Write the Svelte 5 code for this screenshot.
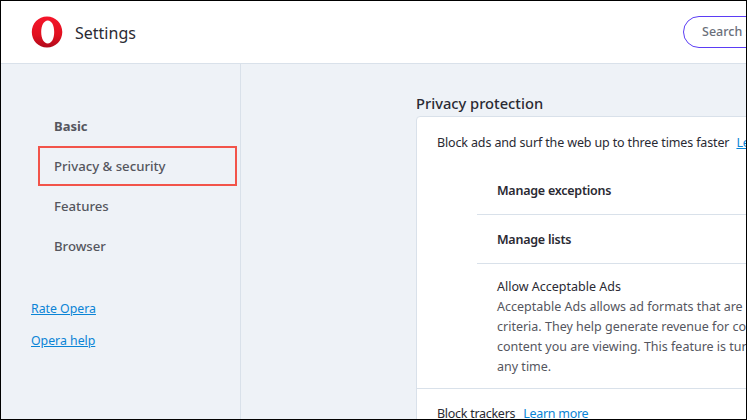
<script lang="ts">
  const navItems = [
    { label: 'Basic', bold: true },
    { label: 'Privacy & security', boxed: true },
    { label: 'Features' },
    { label: 'Browser' }
  ];
</script>

<div class="frame">
  <header class="topbar">
    <svg class="logo" viewBox="0 0 32 32" width="32" height="32" aria-hidden="true">
      <defs>
        <linearGradient id="red" x1="0" y1="0" x2="0" y2="1">
          <stop offset="0" stop-color="#f5162b" />
          <stop offset="0.6" stop-color="#e1101f" />
          <stop offset="1" stop-color="#b00a1c" />
        </linearGradient>
      </defs>
      <path
        fill="url(#red)"
        fill-rule="evenodd"
        d="M16 .5C7.300.5.800 7.500.800 16s6.500 15.500 15.200 15.500S31.300 24.500 31.300 16 24.700.5 16 .5zM16.800 4.500c3.900 0 6.400 5.100 6.400 11.500s-2.500 11.500-6.400 11.500-6.600-5.100-6.600-11.500 2.700-11.500 6.600-11.500z"
      />
    </svg>
    <h1 class="title">Settings</h1>
    <div class="search">Search settings</div>
  </header>

  <div class="body">
    <aside class="sidebar">
      <nav class="nav">
        {#each navItems as item}
          <div class="nav__item" class:nav__item--bold={item.bold} class:nav__item--boxed={item.boxed}>
            {item.label}
          </div>
        {/each}
      </nav>
      <div class="links">
        <a href="#rate">Rate Opera</a>
        <a href="#help">Opera help</a>
      </div>
    </aside>

    <main class="main">
      <h2 class="heading">Privacy protection</h2>
      <section class="card">
        <div class="intro">
          <span>Block ads and surf the web up to three times faster</span>
          <a href="#learn">Learn more</a>
        </div>
        <div class="sub">
          <div class="sub__row">Manage exceptions</div>
          <div class="sub__row">Manage lists</div>
          <div class="sub__text">
            <div class="sub__title">Allow Acceptable Ads</div>
            <div class="sub__desc">
              Acceptable Ads allows ad formats that are respectful of users and adhere to a strict set of<br />
              criteria. They help generate revenue for content creators and do not interfere with the<br />
              content you are viewing. This feature is turned on by default and you can turn it off at<br />
              any time.
            </div>
          </div>
        </div>
        <div class="trackers">
          <span>Block trackers</span>
          <a href="#trackers">Learn more</a>
        </div>
      </section>
    </main>
  </div>
</div>

<style>
  :global(body) {
    margin: 0;
  }

  .frame {
    box-sizing: border-box;
    width: 747px;
    height: 420px;
    overflow: hidden;
    display: flex;
    flex-direction: column;
    background: #eef2f7;
    border: 1px solid #000;
    font-family: "Noto Sans", "Open Sans", sans-serif;
    color: #2a2a33;
  }

  .topbar {
    flex: none;
    box-sizing: border-box;
    height: 63px;
    display: flex;
    align-items: center;
    padding-left: 30px;
    background: #fff;
    border-bottom: 1px solid #d9e1ea;
  }

  .logo {
    flex: none;
  }

  .title {
    margin: 2px 0 0 12px;
    font-size: 16px;
    font-weight: 400;
    color: #2a2a33;
  }

  .search {
    flex: none;
    box-sizing: border-box;
    width: 240px;
    height: 32px;
    margin-left: auto;
    margin-right: -177px;
    padding: 6px 0 0 18px;
    border: 1px solid #5b3df5;
    border-radius: 16px;
    font-size: 12.5px;
    font-weight: 500;
    color: #6b6f7a;
  }

  .body {
    flex: 1;
    display: flex;
    min-height: 0;
  }

  .sidebar {
    flex: none;
    box-sizing: border-box;
    width: 240px;
    border-right: 1px solid #d9e1ea;
  }

  .nav {
    padding: 42px 0 0 37px;
  }

  .nav__item {
    box-sizing: border-box;
    width: 199px;
    height: 40px;
    display: flex;
    align-items: center;
    padding-left: 16px;
    font-size: 13.2px;
    font-weight: 500;
    color: #55565e;
  }

  .nav__item--bold {
    font-size: 13px;
    font-weight: 700;
  }

  .nav__item--boxed {
    outline: 2px solid #f2544a;
    outline-offset: -2px;
  }

  .links {
    display: flex;
    flex-direction: column;
    gap: 12px;
    padding: 33px 0 0 30px;
    font-size: 12.3px;
    line-height: 20px;
  }

  a {
    color: #0a84d6;
  }

  .main {
    flex: 1;
    min-width: 0;
    padding: 29px 0 0 175px;
  }

  .heading {
    margin: 0 0 3px;
    font-size: 14.7px;
    line-height: 20px;
    font-weight: 500;
    color: #2a2a33;
  }

  .card {
    box-sizing: border-box;
    width: 640px;
    background: #fff;
    border: 1px solid #d9e1ea;
    border-radius: 4px;
    font-size: 12.5px;
    line-height: 20px;
  }

  .intro {
    padding: 16px 20px 0;
    white-space: nowrap;
    letter-spacing: -0.14px;
  }

  .intro a {
    margin-left: 4px;
  }

  .sub {
    margin: 13px 0 0 60px;
  }

  .sub__row {
    height: 46px;
    display: flex;
    align-items: center;
    padding: 2px 0 0 20px;
    font-weight: 600;
    letter-spacing: -0.24px;
    border-bottom: 1px solid #d9e1ea;
  }

  .sub__text {
    padding: 13px 0 11px 20px;
  }

  .sub__desc {
    color: #55565e;
    white-space: nowrap;
  }

  .trackers {
    padding: 15px 20px 0;
    border-top: 1px solid #d9e1ea;
    letter-spacing: -0.28px;
  }

  .trackers a {
    margin-left: 5px;
  }
</style>
